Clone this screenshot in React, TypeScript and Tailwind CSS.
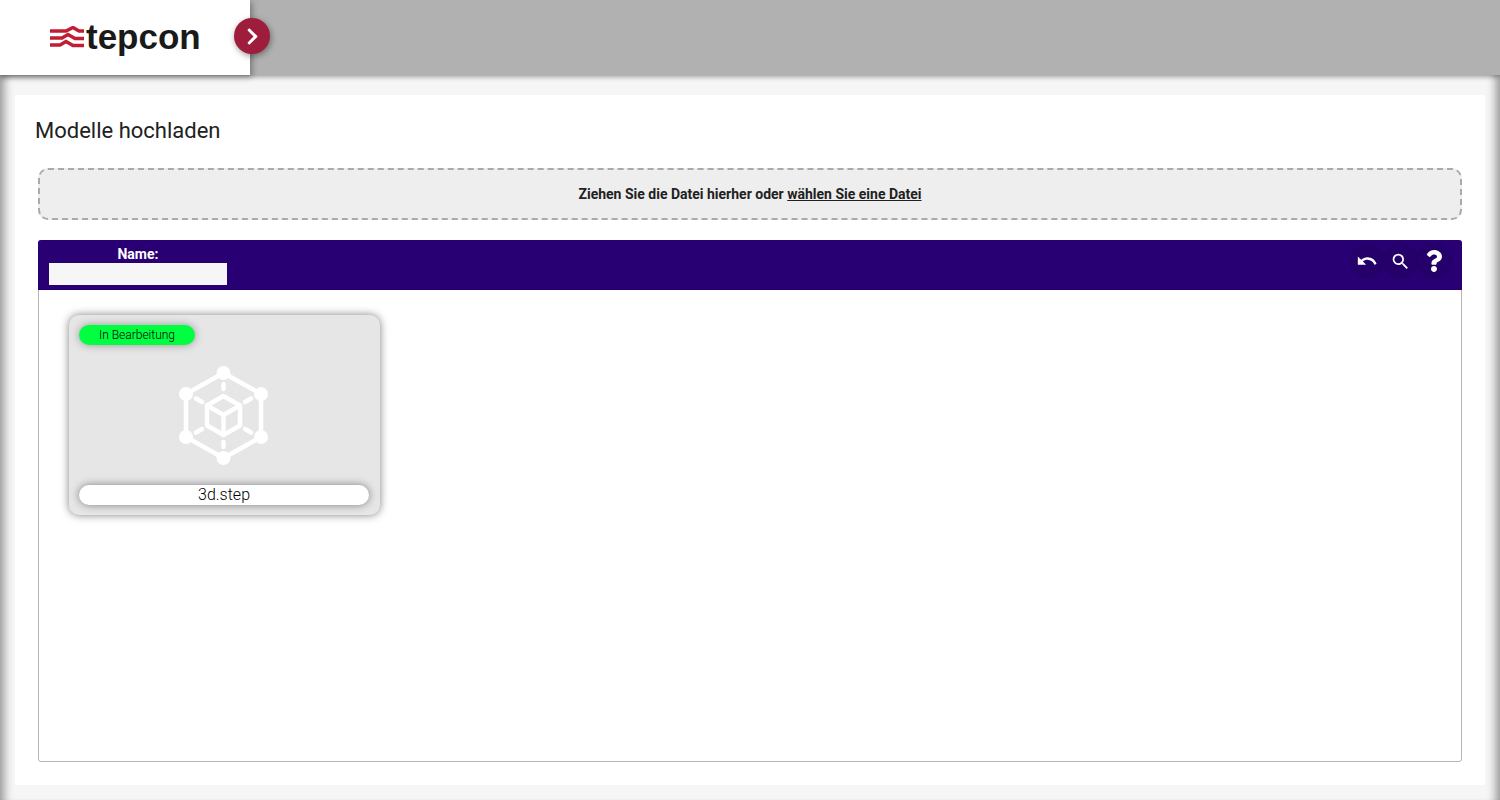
import { FaChevronRight, FaQuestion } from "react-icons/fa";
import { MdSearch, MdUndo } from "react-icons/md";

const LogoMark = () => (
	<svg width="34" height="24" viewBox="0 0 34 24" fill="none" stroke="#c01f33" strokeWidth="3.5">
		<path d="M0 5H16L23 1.5L29 5H34" />
		<path d="M0 12H12L18 8.5L25 12.5H34" />
		<path d="M0 19H10L16 15.5L23 19.5H34" />
	</svg>
);

const ModelIcon = () => (
	<svg width="90" height="100" viewBox="0 0 90 100" fill="none" stroke="#ffffff" strokeLinecap="round" strokeLinejoin="round">
		<path d="M44.5 8L82 29V72L44.5 93L7 72V29Z" strokeWidth="4.5" />
		<g fill="#ffffff" stroke="none">
			<circle cx="44.5" cy="8" r="7" />
			<circle cx="82" cy="29" r="7" />
			<circle cx="82" cy="72" r="7" />
			<circle cx="44.5" cy="93" r="7" />
			<circle cx="7" cy="72" r="7" />
			<circle cx="7" cy="29" r="7" />
		</g>
		<path d="M44.5 19V24M44.5 77V82M17 33.5L23 37M66 64L72 67.5M72 33.5L66 37M23 64L17 67.5" strokeWidth="4.5" />
		<path d="M44.5 31L61 40.5V60.5L44.5 70L28 60.5V40.5Z" strokeWidth="4.5" />
		<path d="M28 40.5L44.5 50L61 40.5M44.5 50V70" strokeWidth="4.5" />
	</svg>
);

const ToolButton = ({ children }: { children: React.ReactNode }) => (
	<button className="flex h-8 w-8 items-center justify-center rounded-full bg-[#25006b] text-white shadow-[0_0_4px_rgba(0,0,0,0.2)]">
		{children}
	</button>
);

export default function App() {
	return (
		<div className="flex h-[800px] flex-col overflow-hidden bg-[#f6f6f6] font-['Roboto',sans-serif] text-[#212121]">
			<header className="relative z-10 flex h-[75px] shrink-0 bg-[#b1b1b1] shadow-[0_2px_5px_rgba(0,0,0,0.35)]">
				<div className="relative flex w-[250px] items-center bg-white pl-[50px] shadow-[2px_2px_6px_rgba(0,0,0,0.35)]">
					<LogoMark />
					<span className="mb-[3px] ml-[2px] font-['Liberation_Sans',sans-serif] text-[35px] leading-none font-bold text-[#1a1a1a]">
						tepcon
					</span>
					<button className="absolute top-[18px] left-[234px] flex h-9 w-9 items-center justify-center rounded-full bg-[#9e1c3c] text-white shadow-[1px_2px_6px_rgba(0,0,0,0.4)]">
						<FaChevronRight className="text-[19px]" />
					</button>
				</div>
			</header>

			<main className="min-h-0 flex-1 px-[15px] pt-5 pb-[15px] shadow-[inset_12px_0_10px_-8px_rgba(0,0,0,0.4),inset_-12px_0_10px_-8px_rgba(0,0,0,0.4)]">
				<section className="flex h-full flex-col rounded-[2px] bg-white pt-5 pr-[23px] pb-[23px] pl-[23px]">
					<h1 className="-ml-[3px] text-[22px] leading-[31px] text-[#212121]">Modelle hochladen</h1>

					<div className="mt-[22px] flex h-[52px] shrink-0 items-center justify-center rounded-[10px] border-2 border-dashed border-[#aaaaaa] bg-[#eeeeee] pt-px text-[14px] font-bold">
						<span>
							Ziehen Sie die Datei hierher oder <span className="underline">wählen Sie eine Datei</span>
						</span>
					</div>

					<div className="mt-5 flex min-h-0 flex-1 flex-col rounded-[3px] border border-[#b5b5b5]">
						<div className="-mx-px -mt-px flex h-[50px] shrink-0 items-start justify-between rounded-t-[3px] bg-[#280074] pr-[12px] pl-[11px]">
							<div className="flex w-[178px] flex-col pt-[5px]">
								<span className="text-center text-[14px] leading-[18px] font-bold text-white">Name:</span>
								<input className="h-[22px] w-full bg-[#f6f6f6]" />
							</div>
							<div className="mt-[5px] flex items-center gap-[1.5px]">
								<ToolButton>
									<MdUndo className="text-[22px]" />
								</ToolButton>
								<ToolButton>
									<MdSearch className="text-[21px]" />
								</ToolButton>
								<ToolButton>
									<FaQuestion className="text-[22px]" />
								</ToolButton>
							</div>
						</div>

						<div className="pt-[25px] pl-[30px]">
							<div className="flex h-[200px] w-[311px] flex-col justify-between rounded-[10px] bg-[#e6e6e6] py-[10px] pr-[11px] pl-[10px] shadow-[0_0_9px_rgba(0,0,0,0.5)]">
								<span className="flex h-5 w-[116px] items-center justify-center rounded-full bg-[#00ff41] text-[12px] font-light text-black shadow-[0_0_8px_rgba(0,0,0,0.35)]">
									In Bearbeitung
								</span>
								<div className="flex justify-center">
									<ModelIcon />
								</div>
								<span className="flex h-5 items-center justify-center rounded-full bg-white text-[16px] font-light text-black shadow-[0_0_8px_rgba(0,0,0,0.45)]">
									3d.step
								</span>
							</div>
						</div>
					</div>
				</section>
			</main>
		</div>
	);
}
